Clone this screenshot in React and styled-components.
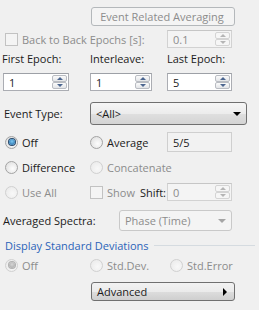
import React from 'react';
import styled, { createGlobalStyle } from 'styled-components';

const GlobalStyle = createGlobalStyle`
  html, body {
    margin: 0;
    padding: 0;
    background: #f0f0f0;
  }
  body {
    font-family: "Open Sans", "Noto Sans", sans-serif;
    font-size: 11px;
    color: #1b1b1b;
  }
`;

const Panel = styled.div`
  width: 259px;
  height: 310px;
  box-sizing: border-box;
  padding: 7px 0 0 2px;
  display: flex;
  flex-direction: column;
  background: #f0f0f0;
`;

const Row = styled.div`
  display: grid;
  grid-template-columns: 88px 77px 1fr;
  align-items: center;
  height: ${(p) => p.h}px;
  margin-top: ${(p) => p.gap || 0}px;
`;

const FlexRow = styled.div`
  display: flex;
  align-items: center;
  height: ${(p) => p.h}px;
  margin-top: ${(p) => p.gap || 0}px;
  padding-right: ${(p) => p.pr || 0}px;
  justify-content: ${(p) => p.justify || 'flex-start'};
`;

const Cell = styled.div`
  display: flex;
  align-items: center;
  grid-column: ${(p) => p.span || 'auto'};
  padding-left: ${(p) => p.pl || 0}px;
  gap: ${(p) => p.gap || 0}px;
  height: 100%;
  white-space: nowrap;
`;

const Label = styled.span`
  color: ${(p) => (p.disabled ? '#8c8c8c' : '#1b1b1b')};
  white-space: nowrap;
  line-height: 1;
`;

const PushButton = styled.div`
  width: 144px;
  height: 19px;
  box-sizing: border-box;
  margin-left: 1px;
  border: 1px solid ${(p) => (p.disabled ? '#b4b8bb' : '#707070')};
  border-radius: 3px;
  background: ${(p) => (p.disabled
    ? '#f4f4f4'
    : 'linear-gradient(#f2f2f2 0%, #ebebeb 50%, #dddddd 51%, #cfcfcf 100%)')};
  color: ${(p) => (p.disabled ? '#8c8c8c' : '#1b1b1b')};
  display: flex;
  align-items: center;
  justify-content: ${(p) => (p.left ? 'space-between' : 'center')};
  padding: 0 7px 0 5px;
`;

const RightArrow = styled.span`
  width: 0;
  height: 0;
  border-top: 4px solid transparent;
  border-bottom: 4px solid transparent;
  border-left: 4px solid #000;
`;

const Check = styled.span`
  width: 13px;
  height: 13px;
  box-sizing: border-box;
  flex: none;
  border: 1px solid ${(p) => (p.disabled ? '#c2c2c2' : '#8e8f8f')};
  background: ${(p) => (p.disabled ? '#f4f4f4' : 'linear-gradient(135deg, #dcdcdc, #fefefe)')};
`;

const Radio = styled.span`
  width: 13px;
  height: 13px;
  box-sizing: border-box;
  flex: none;
  border-radius: 50%;
  border: 1px solid ${(p) => (p.disabled ? '#d0d0d0' : '#a3a3a3')};
  background: ${(p) => (p.disabled
    ? 'radial-gradient(circle at 60% 60%, #f8f8f8, #e8e8e8)'
    : 'radial-gradient(circle at 60% 60%, #fdfdfd, #dadada)')};
  display: flex;
  align-items: center;
  justify-content: center;
  &::after {
    content: '';
    display: ${(p) => (p.checked ? 'block' : 'none')};
    width: 6px;
    height: 6px;
    border-radius: 50%;
    background: ${(p) => (p.disabled
    ? 'radial-gradient(circle at 50% 40%, #d6d6d6, #a2a2a2)'
    : 'radial-gradient(circle at 50% 40%, #7cc8f2, #17609f)')};
    box-shadow: 0 0 0 1px ${(p) => (p.disabled ? '#b0b0b0' : '#29496b')};
  }
`;

const Choice = styled.label`
  display: flex;
  align-items: center;
  gap: 4px;
`;

const SpinBox = styled.div`
  width: ${(p) => p.w}px;
  height: 18px;
  box-sizing: border-box;
  margin-left: ${(p) => p.ml || 0}px;
  border: 1px solid ${(p) => (p.disabled ? '#d2d2d2' : '#abadb3')};
  border-top-color: ${(p) => (p.disabled ? '#c6c6c6' : '#9da0a6')};
  background: ${(p) => (p.disabled ? '#f4f4f4' : '#ffffff')};
  color: ${(p) => (p.disabled ? '#8c8c8c' : '#1b1b1b')};
  display: flex;
  align-items: center;
  justify-content: space-between;
  padding: 0 1px 0 5px;
`;

const SpinButtons = styled.div`
  display: flex;
  flex-direction: column;
  width: 15px;
  height: 14px;
`;

const SpinHalf = styled.div`
  flex: 1;
  box-sizing: border-box;
  border: 1px solid ${(p) => (p.disabled ? '#d4d4d4' : '#b9bcc2')};
  border-radius: 2px;
  background: ${(p) => (p.disabled ? '#f6f6f6' : 'linear-gradient(#fbfbfb, #e3e5e8)')};
  display: flex;
  align-items: center;
  justify-content: center;
  &::after {
    content: '';
    border-left: 3px solid transparent;
    border-right: 3px solid transparent;
    ${(p) => (p.down ? 'border-top' : 'border-bottom')}: 3px solid ${(p) => (p.disabled ? '#b5b5b5' : '#4c6690')};
  }
`;

const Field = styled.div`
  width: 65px;
  height: 20px;
  box-sizing: border-box;
  border: 1px solid #cfcfcf;
  background: #f2f2f2;
  display: flex;
  align-items: center;
  padding-left: 5px;
`;

const Combo = styled.div`
  width: ${(p) => p.w}px;
  height: ${(p) => p.h}px;
  box-sizing: border-box;
  border: 1px solid ${(p) => (p.disabled ? '#c9c9c9' : '#707070')};
  border-radius: 3px;
  background: ${(p) => (p.disabled
    ? '#f4f4f4'
    : 'linear-gradient(#f6f6f6 0%, #ececec 50%, #dfdfdf 51%, #d4d4d4 100%)')};
  color: ${(p) => (p.disabled ? '#8c8c8c' : '#1b1b1b')};
  display: flex;
  align-items: center;
  justify-content: space-between;
  padding: 0 5px 0 5px;
`;

const DownArrow = styled.span`
  width: 0;
  height: 0;
  border-left: 4px solid transparent;
  border-right: 4px solid transparent;
  border-top: 4px solid ${(p) => (p.disabled ? '#a5a5a5' : '#000')};
`;

const GroupTitle = styled.div`
  flex: 1;
  display: flex;
  align-items: center;
  gap: 5px;
  padding-left: 3px;
  padding-right: 4px;
  color: #2c64b9;
  white-space: nowrap;
  &::after {
    content: '';
    flex: 1;
    height: 1px;
    background: #d5dbe0;
  }
`;

const Spin = ({ value, w, ml, disabled }) => (
  <SpinBox w={w} ml={ml} disabled={disabled}>
    <span>{value}</span>
    <SpinButtons>
      <SpinHalf disabled={disabled} />
      <SpinHalf disabled={disabled} down />
    </SpinButtons>
  </SpinBox>
);

const App = () => (
  <>
    <GlobalStyle />
    <Panel>
      <Row h={19}>
        <Cell span="2 / 4">
          <PushButton disabled>Event Related Averaging</PushButton>
        </Cell>
      </Row>

      <Row h={18} gap={4}>
        <Cell span="1 / 3" pl={3}>
          <Choice>
            <Check disabled />
            <Label disabled>Back to Back Epochs [s]:</Label>
          </Choice>
        </Cell>
        <Cell>
          <Spin value="0.1" w={65} disabled />
        </Cell>
      </Row>

      <Row h={14} gap={3}>
        <Cell><Label>First Epoch:</Label></Cell>
        <Cell><Label>Interleave:</Label></Cell>
        <Cell><Label>Last Epoch:</Label></Cell>
      </Row>

      <Row h={18} gap={8}>
        <Cell><Spin value="1" w={66} ml={1} /></Cell>
        <Cell><Spin value="1" w={62} /></Cell>
        <Cell><Spin value="5" w={65} /></Cell>
      </Row>

      <Row h={23} gap={11}>
        <Cell pl={2}><Label>Event Type:</Label></Cell>
        <Cell span="2 / 4">
          <Combo w={157} h={23}>
            <span>&lt;All&gt;</span>
            <DownArrow />
          </Combo>
        </Cell>
      </Row>

      <Row h={20} gap={7}>
        <Cell pl={3}>
          <Choice><Radio checked /><Label>Off</Label></Choice>
        </Cell>
        <Cell>
          <Choice><Radio /><Label>Average</Label></Choice>
        </Cell>
        <Cell><Field>5/5</Field></Cell>
      </Row>

      <Row h={16} gap={7}>
        <Cell pl={3}>
          <Choice><Radio /><Label>Difference</Label></Choice>
        </Cell>
        <Cell span="2 / 4">
          <Choice><Radio disabled /><Label disabled>Concatenate</Label></Choice>
        </Cell>
      </Row>

      <Row h={17} gap={8}>
        <Cell pl={3}>
          <Choice><Radio disabled /><Label disabled>Use All</Label></Choice>
        </Cell>
        <Cell gap={5}>
          <Choice><Check disabled /><Label disabled>Show</Label></Choice>
          <Label>Shift:</Label>
        </Cell>
        <Cell><Spin value="0" w={65} disabled /></Cell>
      </Row>

      <FlexRow h={21} gap={10} pr={27} justify="space-between">
        <Cell pl={1}><Label>Averaged Spectra:</Label></Cell>
        <Combo w={113} h={21} disabled>
          <span>Phase (Time)</span>
          <DownArrow disabled />
        </Combo>
      </FlexRow>

      <FlexRow h={14} gap={7}>
        <GroupTitle>Display Standard Deviations</GroupTitle>
      </FlexRow>

      <Row h={14} gap={6}>
        <Cell pl={3}>
          <Choice><Radio checked disabled /><Label disabled>Off</Label></Choice>
        </Cell>
        <Cell>
          <Choice><Radio disabled /><Label disabled>Std.Dev.</Label></Choice>
        </Cell>
        <Cell pl={3}>
          <Choice><Radio disabled /><Label disabled>Std.Error</Label></Choice>
        </Cell>
      </Row>

      <Row h={19} gap={10}>
        <Cell span="2 / 4">
          <PushButton left>
            <span>Advanced</span>
            <RightArrow />
          </PushButton>
        </Cell>
      </Row>
    </Panel>
  </>
);

export default App;
